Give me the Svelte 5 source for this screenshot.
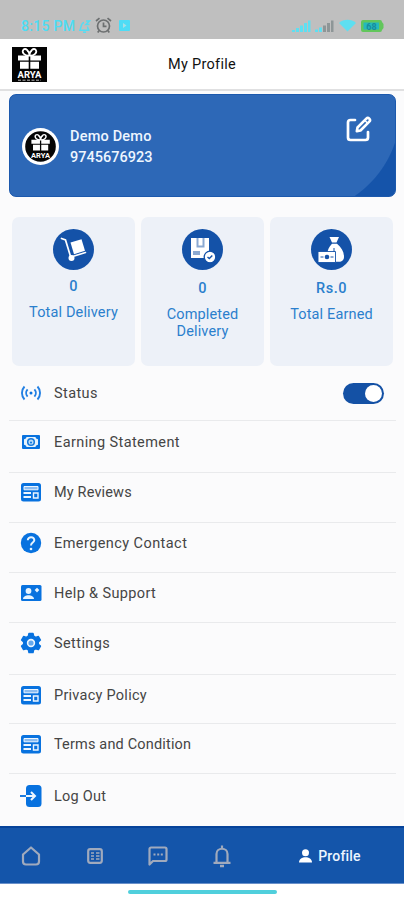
<script lang="ts">
  // Delivery partner profile screen: account card, totals, menu and tab bar.

  type MenuItem = {
    label: string;
    icon: string;
    height: number;
    pad: number;
    spacing: number;
  };

  const stats = [
    { icon: 'trolley', value: '0', label: 'Total Delivery' },
    { icon: 'parcel', value: '0', label: 'Completed Delivery' },
    { icon: 'money', value: 'Rs.0', label: 'Total Earned' },
  ];

  const items: MenuItem[] = [
    { label: 'Status', icon: 'live', height: 55, pad: 17, spacing: 0.4 },
    { label: 'Earning Statement', icon: 'cash', height: 52, pad: 11, spacing: 0.4 },
    { label: 'My Reviews', icon: 'list', height: 50, pad: 9, spacing: 0.15 },
    { label: 'Emergency Contact', icon: 'help', height: 50, pad: 10, spacing: 0.43 },
    { label: 'Help & Support', icon: 'contact', height: 50, pad: 10, spacing: 0.36 },
    { label: 'Settings', icon: 'gear', height: 52, pad: 10, spacing: 0.4 },
    { label: 'Privacy Policy', icon: 'list', height: 49, pad: 10, spacing: 0.26 },
    { label: 'Terms and Condition', icon: 'list', height: 50, pad: 10, spacing: 0.17 },
    { label: 'Log Out', icon: 'logout', height: 53, pad: 12, spacing: 0.25 },
  ];

  let online = $state(true);
</script>

{#snippet gift()}
  <g fill="none" stroke="#fff" stroke-width="1.7">
    <path d="M17.5 8.500C13 9 9 5.500 11.500 2.500C14 .8 17 4 17.500 8.500C18 4 21 .8 23.500 2.500C26 5.500 22 9 17.500 8.500" />
    <path d="M15 3.500l2.500 2 2.500-2" stroke-width="1.300" />
  </g>
  <path fill="#fff" d="M6 8.500h10.700v5H6zM18.300 8.500H29v5H18.300zM8 14.800h8.700v7H8zM18.300 14.800H27v7h-8.700z" />
{/snippet}

<div class="screen">
  <div class="status">
    <span class="status__time">8:15 PM</span>
    <svg class="status__bell" width="13" height="14" viewBox="0 0 13 14" fill="none" stroke="#55dcf3" stroke-width="1.5">
      <path d="M2 10.500c1.500-1.500.5-6.500 4-7M9.500 7.500c0 1.500.5 2.500 1.500 3.500M1 11.200h10.500M5 13.200h3M8 2h3.500L8 5.500h3.500" />
    </svg>
    <svg class="status__alarm" width="17" height="17" viewBox="0 0 17 17" fill="none" stroke="#6c6f70" stroke-width="1.700">
      <circle cx="8.500" cy="9" r="6" />
      <path d="M8.500 5.500V9.300h3M1 4l3.500-2.800M16 4l-3.500-2.800M4.200 13.500 2.700 15.500M12.800 13.500l1.500 2" />
    </svg>
    <svg width="11" height="11" viewBox="0 0 11 11">
      <rect width="11" height="11" rx="1" fill="#4edcf5" />
      <path d="M4 3l3.500 2.500L4 8z" fill="#a7dfe6" />
    </svg>
    <div class="status__right">
      <svg width="19" height="12" viewBox="0 0 19 12" fill="#5edff1">
        <path d="M0 10h3v2H0zM4 8h3v4H4zM8 5.500h3V12H8zM12 3h3v9h-3zM16 .5h2.500V12H16z" />
      </svg>
      <svg width="19" height="12" viewBox="0 0 19 12" fill="#8e9697">
        <path fill="#5edff1" d="M0 9.500h3V12H0zM4 7.500h3V12H4z" />
        <path d="M8 5.500h3V12H8zM12 3h3v9h-3zM16 .5h2.500V12H16z" />
      </svg>
      <svg class="status__wifi" width="17" height="13" viewBox="0 0 17 13">
        <path fill="#5edff1" d="M0 4C4.500-.3 12.500-.3 17 4L8.500 12.500z" />
      </svg>
      <svg width="23" height="12" viewBox="0 0 23 12">
        <path fill="#62c65c" d="M2 0h17a2 2 0 0 1 2 2l1.500 2v4L21 10a2 2 0 0 1-2 2H2a2 2 0 0 1-2-2V2a2 2 0 0 1 2-2z" />
        <path fill="#25b9bd" d="M2.500 2.500h15.500v7H2.500z" />
        <text x="10.500" y="9.500" text-anchor="middle" font-size="9" font-weight="700" fill="#168c9c">68</text>
      </svg>
    </div>
  </div>

  <header class="header">
    <svg class="header__logo" width="35" height="35" viewBox="0 0 35 35">
      <rect width="35" height="35" fill="#030303" />
      {@render gift()}
      <text x="17.500" y="30.500" text-anchor="middle" font-size="9.500" font-weight="700" fill="#fff" textLength="24">ARYA</text>
      <path d="M6 33.200h23" stroke="#bbb" stroke-width="1" stroke-dasharray="3 1.500" />
    </svg>
    <h1 class="header__title">My Profile</h1>
  </header>

  <section class="account">
    <svg class="account__avatar" width="37" height="37" viewBox="0 0 37 37">
      <circle cx="18.500" cy="18.500" r="18.500" fill="#fff" />
      <circle cx="18.500" cy="18.500" r="15.300" fill="#050505" />
      <g transform="translate(4.600 5) scale(.8)">
        {@render gift()}
      </g>
      <text x="18.500" y="29.500" text-anchor="middle" font-size="7.500" font-weight="700" fill="#fff" textLength="19">ARYA</text>
    </svg>
    <div class="account__info">
      <span class="account__name">Demo Demo</span>
      <span class="account__phone">9745676923</span>
    </div>
    <button class="account__edit" aria-label="Edit profile">
      <svg width="26" height="26" viewBox="0 0 26 26" fill="none" stroke="#fff" stroke-width="2.700" stroke-linecap="round" stroke-linejoin="round">
        <path d="M9 4H4.500A2.500 2.500 0 0 0 2 6.500v15A2.500 2.500 0 0 0 4.500 24h15a2.500 2.500 0 0 0 2.500-2.500V16" />
        <path d="M11.500 11.500 20.300 2.700a2 2 0 0 1 3 3L14.500 14.500l-3.700.7z" stroke-width="2.600" />
        <path d="M19 4.500l2.500 2.500" stroke-width="1.500" />
      </svg>
    </button>
  </section>

  <section class="stats">
    {#each stats as stat (stat.label)}
      <div class="stat" class:stat--low={stat.icon !== 'trolley'}>
        <svg class="stat__icon" width="41" height="41" viewBox="0 0 41 41">
          <circle cx="20.500" cy="20.500" r="20.500" fill="#1452a8" />
          {#if stat.icon === 'trolley'}
            <path d="M8.500 9.500l4 1.500 5.500 18" fill="none" stroke="#fff" stroke-width="1.700" stroke-linecap="round" />
            <path d="M18 28l14.500-4.500" stroke="#fff" stroke-width="1.600" stroke-linecap="round" />
            <path fill="#fff" d="M17.500 13.500l11-3.200 3.500 11.500-11 3.500z" />
            <circle cx="18.500" cy="29" r="3" fill="#fff" />
          {:else if stat.icon === 'parcel'}
            <path fill="#fff" d="M9 9h18v20H9z" />
            <path fill="#8ba9d2" d="M14.500 9h2v7.500h4V9h2v9.500h-8zM11 22h7v4h-7z" />
            <circle cx="28" cy="28" r="5.800" fill="#fff" stroke="#1452a8" stroke-width="1.300" />
            <path d="M25.500 28l1.800 1.600 3-3" fill="none" stroke="#1452a8" stroke-width="1.400" />
          {:else}
            <path fill="#fff" d="M18.500 8h9.500l-2.500 5.500h-4.500z" />
            <path fill="#fff" d="M21 14.800h5c4.500 4 7 8 7 13 0 3.500-2 5-5 5H18c-3-7-2-13 3-18z" />
            <path fill="#fff" stroke="#1452a8" stroke-width=".9" d="M7 22.500h17.500v11H7z" />
            <path d="M9.500 28h3m7 0h3M23 19v4" stroke="#1452a8" />
            <circle cx="16" cy="28" r="2.300" fill="#1452a8" />
          {/if}
        </svg>
        <span class="stat__value">{stat.value}</span>
        <span class="stat__label">{stat.label}</span>
      </div>
    {/each}
  </section>

  <nav class="menu">
    {#each items as item (item.label)}
      <div class="menu__row" style="height: {item.height}px; padding-top: {item.pad}px">
        <svg class="menu__icon" width="22" height="22" viewBox="0 0 22 22" fill="#0872df">
          {#if item.icon === 'live'}
            <path
              fill="none"
              stroke="#2380e3"
              stroke-width="1.900"
              d="M4.500 4.500c-3.400 3.700-3.400 9.300 0 13M17.500 4.500c3.400 3.700 3.400 9.300 0 13M7.600 7.300c-1.900 2.100-1.900 5.300 0 7.400M14.400 7.300c1.900 2.100 1.900 5.300 0 7.400"
            />
            <circle cx="11" cy="11" r="1.500" />
          {:else if item.icon === 'cash'}
            <rect x="2" y="4" width="18" height="14" rx="1" />
            <path fill="#e7f3fc" d="M6.500 6h9c.3 1.500 1 2 2.500 2.300v5.400c-1.500.3-2.200.8-2.500 2.300h-9C6.200 14.500 5.500 14 4 13.700V8.300C5.500 8 6.200 7.500 6.500 6z" />
            <circle cx="11" cy="11" r="3.300" fill="#b9dcf7" stroke="#1478dd" stroke-width="1.500" />
            <circle cx="11" cy="11.500" r="1" />
          {:else if item.icon === 'list'}
            <rect x="1" y="2" width="20" height="18.500" rx="2.500" />
            <path d="M4 5.500h14v3.300H4z" fill="#8bbcf0" stroke="#edf6ff" />
            <path d="M3.500 12h7.500M3.500 16h7.500" stroke="#edf6ff" stroke-width="1.800" />
            <path d="M13.500 12h4.500v5h-4.500z" stroke="#edf6ff" stroke-width="1.400" />
          {:else if item.icon === 'help'}
            <circle cx="11" cy="11" r="10.200" />
            <path d="M7.800 8.300c0-4.300 6.800-4 6.500 0C14.100 10.600 11 10.700 11 13.500" fill="none" stroke="#e7f4ff" stroke-width="2" />
            <circle cx="11" cy="17" r="1.300" fill="#e7f4ff" />
          {:else if item.icon === 'contact'}
            <rect x="1" y="3" width="20.500" height="16" rx="1.500" />
            <circle cx="8.500" cy="9" r="2.900" fill="#e7f4ff" />
            <path fill="#e7f4ff" d="M3 17c.3-5 10.700-5 11 0z" />
            <path fill="#e7f4ff" d="M17 5.800l2.300 2.300L17 10.400l-2.300-2.300z" />
          {:else if item.icon === 'gear'}
            <path stroke="#0872df" stroke-width="1.500" stroke-linejoin="round" d="M9 1.500h4l.6 2.700 2 1.200 2.800-.9 2 3.500-2.100 1.900v2.300l2.100 1.900-2 3.500-2.800-.9-2 1.200-.6 2.700H9l-.6-2.700-2-1.200-2.800.9-2-3.500 2.100-1.900V9.900L1.600 8l2-3.500 2.800.9 2-1.200z" />
            <circle cx="11" cy="11" r="3.400" fill="#65a9ee" stroke="#eef7ff" stroke-width="1.600" />
          {:else}
            <rect x="6" y="0" width="15.500" height="22" rx="3.500" />
            <path d="M0 11h6" stroke="#1c7ce0" stroke-width="2" />
            <path d="M6 11h8.500M11 7l4 4-4 4" fill="none" stroke="#eef7ff" stroke-width="2" />
          {/if}
        </svg>
        <span class="menu__label" style="letter-spacing: {item.spacing}px">{item.label}</span>
        {#if item.icon === 'live'}
          <button
            class="toggle"
            class:toggle--on={online}
            role="switch"
            aria-checked={online}
            aria-label="Status"
            onclick={() => (online = !online)}
          >
            <span class="toggle__knob"></span>
          </button>
        {/if}
      </div>
    {/each}
  </nav>

  <footer class="tabs">
    <svg width="20" height="20" viewBox="0 0 20 20">
      <path d="M2 8.500 10 1.500l8 7V15.500a3 3 0 0 1-3 3H5a3 3 0 0 1-3-3z" />
    </svg>
    <svg width="16" height="16" viewBox="0 0 16 16">
      <rect x="1.200" y="1.200" width="13.600" height="13.600" rx="2" />
      <path d="M4 5h3M4 8h3M4 11h3M9 5h3.500M9 8h3.500M9 11h3.500" stroke-width="1.500" />
    </svg>
    <svg width="20" height="20" viewBox="0 0 20 20">
      <path d="M1.500 18.500V3a1.500 1.500 0 0 1 1.500-1.500h14A1.500 1.500 0 0 1 18.500 3v10.500a1.500 1.500 0 0 1-1.500 1.500H5z" />
      <path d="M5.500 8.500h2M9.200 8.500h2M12.800 8.500h2" />
    </svg>
    <svg width="20" height="24" viewBox="0 0 20 24">
      <path d="M4.500 18v-8c0-7 11-7 11 0v8M1.500 18.800h17M10 4V1.500" />
      <path d="M8 22h4" stroke-width="2.500" />
    </svg>
    <div class="tabs__active">
      <svg width="13" height="14" viewBox="0 0 13 14">
        <circle cx="6.500" cy="3.700" r="3.500" />
        <path d="M0 13.500c0-7 13-7 13 0z" />
      </svg>
      <span>Profile</span>
    </div>
  </footer>
  <div class="home"><span class="home__bar"></span></div>
</div>

<style>
  :global(body) {
    background: #fff;
  }
  .screen {
    width: 404px;
    height: 900px;
    display: flex;
    flex-direction: column;
    overflow: hidden;
    background: #fbfbfc;
    font-family: Roboto, "Liberation Sans", sans-serif;
  }
  .screen svg {
    display: block;
    flex: none;
  }
  button {
    padding: 0;
    border: 0;
    background: none;
    cursor: pointer;
  }

  .status {
    box-sizing: border-box;
    height: 39px;
    flex: none;
    display: flex;
    align-items: center;
    padding: 12px 20px 0 21px;
    background: #bfbfbf;
  }
  .status__time {
    width: 55px;
    font-size: 14px;
    font-weight: 500;
    letter-spacing: 0.3px;
    color: #4ddcf3;
    white-space: nowrap;
  }
  .status__bell { margin-left: 2px; }
  .status__alarm { margin: 0 7px 0 4px; }
  .status__right {
    display: flex;
    align-items: center;
    gap: 4px;
    margin-left: auto;
  }
  .status__wifi { margin: 0 1px; }

  .header {
    box-sizing: border-box;
    height: 52px;
    flex: none;
    display: grid;
    grid-template-columns: 35px 1fr 35px;
    align-items: center;
    padding: 0 12px;
    background: #fff;
    border-bottom: 2px solid #e0e0e1;
  }
  .header__title {
    margin: 0;
    font-size: 14.5px;
    font-weight: 400;
    letter-spacing: 0.3px;
    color: #111;
    text-align: center;
  }

  .account {
    box-sizing: border-box;
    height: 103px;
    flex: none;
    display: flex;
    align-items: center;
    margin: 3px 8px 0 9px;
    padding: 2px 25px 0 12px;
    border: 1px solid #1c59ad;
    border-radius: 7px;
    background:
      linear-gradient(#2d68b7, #2d68b7) 0 0 / 300px 100% no-repeat,
      radial-gradient(circle at 285px 14px, #2d68b7 105px, #1554aa 106px);
  }
  .account__info {
    display: flex;
    flex-direction: column;
    margin-left: 11px;
    font-size: 14.5px;
    font-weight: 500;
    line-height: 21px;
    color: #eef6ff;
  }
  .account__name { letter-spacing: 0.2px; }
  .account__phone { letter-spacing: 0; }
  .account__edit {
    align-self: flex-start;
    margin: 19px -2px 0 auto;
  }

  .stats {
    height: 149px;
    flex: none;
    display: grid;
    grid-template-columns: repeat(3, 1fr);
    gap: 6px;
    margin: 20px 11px 0 12px;
  }
  .stat {
    display: flex;
    flex-direction: column;
    align-items: center;
    padding-top: 12px;
    border-radius: 7px;
    background: #edf1f8;
    color: #2b7fcd;
    text-align: center;
  }
  .stat__value {
    margin-top: 8px;
    font-size: 14.5px;
    font-weight: 500;
    line-height: 18px;
    letter-spacing: 0.5px;
  }
  .stat__label {
    margin-top: 8px;
    font-size: 14.5px;
    line-height: 17px;
    letter-spacing: 0.15px;
    max-width: 92px;
  }
  .stat--low .stat__value { margin-top: 10px; }

  .menu {
    flex: none;
    height: 460px;
    padding: 0 8px 0 9px;
  }
  .menu__row {
    box-sizing: border-box;
    display: flex;
    align-items: flex-start;
    padding-left: 11px;
    border-bottom: 1px solid #e9eaec;
  }
  .menu__row:last-child { border-bottom: 0; }
  .menu__icon { margin-top: -1px; }
  .menu__label {
    margin-left: 12px;
    font-size: 14.5px;
    line-height: 21px;
    color: #454545;
    white-space: nowrap;
  }

  .toggle {
    box-sizing: border-box;
    width: 41px;
    height: 21px;
    display: flex;
    margin: 0 12px 0 auto;
    padding: 2px;
    border-radius: 11px;
    background: #9aa5b5;
  }
  .toggle--on {
    justify-content: flex-end;
    background: #1451a5;
  }
  .toggle__knob {
    width: 17px;
    height: 17px;
    border-radius: 50%;
    background: #fff;
  }

  .tabs {
    box-sizing: border-box;
    height: 58px;
    flex: none;
    display: grid;
    grid-template-columns: 61px 67px 59px 69px 148px;
    align-items: center;
    justify-items: center;
    border-top: 2px solid #06439a;
    border-bottom: 1px solid #6990ca;
    background: #1455aa;
  }
  .tabs > svg {
    fill: none;
    stroke: #a0aabd;
    stroke-width: 2.2;
    stroke-linejoin: round;
  }
  .tabs__active {
    display: flex;
    align-items: center;
    gap: 6px;
    font-size: 14px;
    font-weight: 500;
    letter-spacing: 0.2px;
    color: #edf5ff;
  }
  .tabs__active svg { fill: #fff; }

  .home {
    flex: 1;
    display: flex;
    justify-content: center;
    background: #fff;
  }
  .home__bar {
    width: 149px;
    height: 4px;
    margin-top: 6px;
    border-radius: 2px;
    background: #50cfdc;
  }
</style>
